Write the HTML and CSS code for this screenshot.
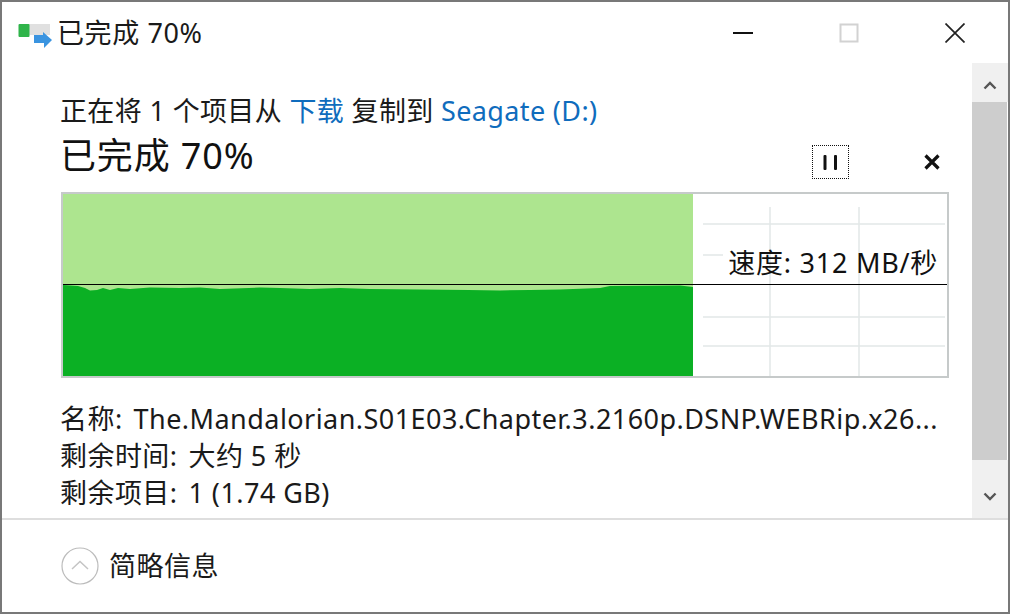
FILE: index.html
```html
<!DOCTYPE html>
<html lang="zh-CN">
<head>
  <meta charset="UTF-8" />
  <title>已完成 70%</title>
  <link rel="stylesheet" href="styles.css">
</head>
<body>
  <div class="window">
    <div class="titlebar">
      <svg class="app-icon" width="36" height="30" viewBox="0 0 36 30">
        <rect x="10" y="4" width="22" height="11" fill="#e0e0e0"/>
        <rect x="0.500" y="4" width="11" height="13" rx="1" fill="#2fb44a"/>
        <path d="M16 15h9v-3l9 8-8 8v-5h-10z" fill="#3a94e0"/>
      </svg>
      <div class="title">已完成 70%</div>
      <div class="win-controls">
        <svg width="20" height="20" viewBox="0 0 20 20" class="win-min"><rect x="0" y="9" width="20" height="2" fill="#111"/></svg>
        <svg width="20" height="20" viewBox="0 0 20 20" class="win-max"><rect x="1.500" y="1.500" width="17" height="17" fill="none" stroke="#d2d2d2" stroke-width="2"/></svg>
        <svg width="20" height="20" viewBox="0 0 20 20" class="win-close"><path d="M0.500 0.500L19.500 19.500M19.500 0.500L0.500 19.500" stroke="#222" stroke-width="1.700" fill="none"/></svg>
      </div>
    </div>

    <div class="main">
      <div class="content">
        <div class="copy-line">正在将 1 个项目从 <span class="link">下载</span> 复制到 <span class="link">Seagate (D:)</span></div>
        <div class="heading-row">
          <h1 class="heading">已完成 70%</h1>
          <div class="op-buttons">
            <div class="pause-btn">
              <svg width="15" height="15" viewBox="0 0 15 15"><rect x="0.500" y="0" width="3" height="15" rx="1" fill="#111"/><rect x="11" y="0" width="3" height="15" rx="1" fill="#111"/></svg>
            </div>
            <div class="cancel-btn">
              <svg width="18" height="18" viewBox="0 0 18 18"><path d="M2.500 2.500L15.500 15.500M15.500 2.500L2.500 15.500" stroke="#111" stroke-width="3.200" fill="none"/></svg>
            </div>
          </div>
        </div>

        <div class="chart">
          <svg class="chart-svg" width="884" height="182" viewBox="0 0 884 182">
            <g stroke="#e2e7e7" stroke-width="1.500">
              <line x1="640" y1="30" x2="882" y2="30"/>
              <line x1="640" y1="61" x2="660" y2="61"/>
              <line x1="640" y1="123" x2="882" y2="123"/>
              <line x1="640" y1="152" x2="882" y2="152"/>
              <line x1="707" y1="13" x2="707" y2="182"/>
              <line x1="796" y1="13" x2="796" y2="182"/>
            </g>
            <rect x="0" y="0" width="630" height="100" fill="#ade58f"/>
            <path d="M0 91L15 92L22 94L27 96.500L34 96L40 94L47 96L55 94L67 95L87 93.500L117 94L137 93.500L157 95L197 93.500L217 94L247 95L277 94L307 95L405 96L437 96.500L467 96L497 95.500L537 94L547 92L617 91.500L630 93V182H0Z" fill="#0bb024"/>
            <line x1="0" y1="90.500" x2="884" y2="90.500" stroke="#000" stroke-width="1"/>
          </svg>
          <div class="speed">速度: 312 MB/秒</div>
        </div>

        <div class="details">
          <div class="detail"><span class="detail-label">名称:</span>The.Mandalorian.S01E03.Chapter.3.2160p.DSNP.WEBRip.x26...</div>
          <div class="detail"><span class="detail-label">剩余时间:</span>大约 5 秒</div>
          <div class="detail"><span class="detail-label">剩余项目:</span>1 (1.74 GB)</div>
        </div>
      </div>

      <div class="scrollbar">
        <div class="scroll-btn scroll-up">
          <svg width="14" height="9" viewBox="0 0 14 9"><path d="M1.500 7.500L7 2L12.500 7.500" stroke="#555" stroke-width="2.400" fill="none"/></svg>
        </div>
        <div class="scroll-thumb"></div>
        <div class="scroll-btn scroll-down">
          <svg width="14" height="9" viewBox="0 0 14 9"><path d="M1.500 1.500L7 7L12.500 1.500" stroke="#555" stroke-width="2.400" fill="none"/></svg>
        </div>
      </div>
    </div>

    <div class="footer">
      <svg width="38" height="38" viewBox="0 0 38 38">
        <circle cx="19" cy="19" r="18" fill="#fff" stroke="#bcbcbc" stroke-width="1.200"/>
        <path d="M11 22L19 14.500L27 22" fill="none" stroke="#c4c4c4" stroke-width="1.500"/>
      </svg>
      <span class="footer-label">简略信息</span>
    </div>
  </div>
</body>
</html>
```

FILE: styles.css
```css
* {
  box-sizing: border-box;
}

html, body {
  margin: 0;
  padding: 0;
}

body {
  width: 1010px;
  height: 614px;
  overflow: hidden;
  background: #fff;
  color: #1a1a1a;
  font-family: "Noto Sans", "Noto Sans CJK SC", sans-serif;
  font-size: 27px;
}

.window {
  width: 1010px;
  height: 614px;
  border: 2px solid #787878;
  background: #fff;
  display: flex;
  flex-direction: column;
}

.titlebar {
  height: 61px;
  flex: none;
  display: flex;
  align-items: center;
  padding-left: 16px;
}

.app-icon {
  flex: none;
  margin-top: 4px;
}

.title {
  margin-left: 3px;
  line-height: 36px;
  letter-spacing: 0.6px;
}

.win-controls {
  margin-left: auto;
  display: flex;
  align-items: center;
  gap: 86px;
  padding-right: 43px;
}

.main {
  flex: none;
  height: 455px;
  display: flex;
}

.content {
  width: 970px;
  padding: 30px 23px 0 59px;
}

.copy-line {
  margin-left: -1px;
  line-height: 36px;
  white-space: nowrap;
  letter-spacing: 0.36px;
}

.link {
  color: #0f6cbd;
}

.heading-row {
  display: flex;
  justify-content: space-between;
  align-items: flex-end;
  height: 50px;
}

.heading {
  margin: 0 0 -2px -1px;
  font-size: 36px;
  font-weight: 400;
  line-height: 50px;
  color: #111;
  letter-spacing: 0.85px;
}

.op-buttons {
  display: flex;
  align-items: center;
  gap: 66px;
}

.pause-btn {
  width: 37px;
  height: 34px;
  border: 1px dotted #111;
  display: flex;
  align-items: center;
  justify-content: center;
}

.cancel-btn {
  width: 34px;
  height: 34px;
  display: flex;
  align-items: center;
  justify-content: center;
}

.chart {
  position: relative;
  width: 888px;
  height: 186px;
  margin-top: 13px;
  border: 2px solid #c6caca;
}

.chart-svg {
  display: block;
}

.speed {
  position: absolute;
  right: 9px;
  top: 51px;
  line-height: 36px;
  white-space: nowrap;
  color: #111;
  letter-spacing: 0.75px;
}

.details {
  margin: 22px 0 0 -1px;
}

.detail {
  line-height: 37px;
  white-space: nowrap;
  letter-spacing: 0.45px;
}

.detail-label {
  margin-right: 11px;
}

.scrollbar {
  width: 36px;
  display: flex;
  flex-direction: column;
}

.scroll-btn {
  background: #f0f0f0;
  display: flex;
  align-items: center;
  justify-content: center;
  flex: none;
}

.scroll-up {
  height: 39px;
  padding-top: 5px;
}

.scroll-thumb {
  flex: 1;
  background: #cdcdcd;
  margin-right: 1px;
}

.scroll-down {
  height: 58px;
  padding-top: 14px;
}

.footer {
  flex: 1;
  border-top: 2px solid #dedede;
  display: flex;
  align-items: center;
  padding-left: 59px;
  gap: 11px;
}

.footer-label {
  margin-left: -1px;
  line-height: 36px;
  letter-spacing: 0.5px;
}
```
